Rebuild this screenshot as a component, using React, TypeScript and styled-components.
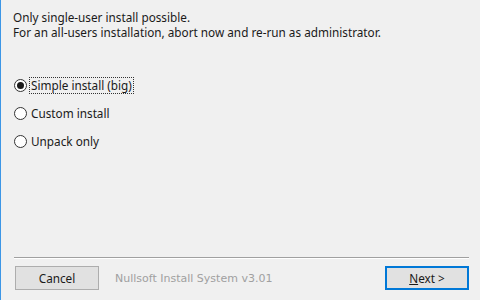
import React from 'react';
import styled, { createGlobalStyle } from 'styled-components';

const GlobalStyle = createGlobalStyle`
  html, body {
    margin: 0;
    padding: 0;
    background: #f0f0f0;
  }
`;

const Window = styled.div`
  width: 480px;
  height: 300px;
  box-sizing: border-box;
  border-left: 1px solid #3c96e6;
  background: #f0f0f0;
  display: flex;
  flex-direction: column;
  font-family: 'Noto Sans', 'Liberation Sans', sans-serif;
  font-size: 11.75px;
  color: #1a1a1a;
`;

const Body = styled.div`
  flex: 1;
  padding: 10px 0 0 12px;
  display: flex;
  flex-direction: column;
`;

const Intro = styled.div`
  line-height: 15px;
  margin-bottom: 37px;
`;

const Options = styled.div`
  display: flex;
  flex-direction: column;
  gap: 11px;
`;

const Option = styled.label`
  display: flex;
  align-items: center;
  gap: 3px;
  height: 17px;
  padding-left: 1px;
`;

const Radio = styled.span<{ $checked?: boolean }>`
  width: 11px;
  height: 11px;
  border: 1px solid #333;
  border-radius: 50%;
  background: #fff;
  display: flex;
  align-items: center;
  justify-content: center;

  &::after {
    content: '';
    width: 7px;
    height: 7px;
    border-radius: 50%;
    background: ${(p) => (p.$checked ? '#1a1a1a' : 'transparent')};
  }
`;

const OptionLabel = styled.span<{ $focused?: boolean }>`
  outline: ${(p) => (p.$focused ? '1px dotted #333' : 'none')};
  padding: 0 1px;
  line-height: 15px;
`;

const Footer = styled.div`
  padding: 0 11px 10px 13px;
  display: flex;
  flex-direction: column;
  gap: 8px;
`;

const Separator = styled.div`
  height: 1px;
  background: #a0a0a0;
  box-shadow: 0 1px 0 #ffffff;
`;

const ButtonRow = styled.div`
  display: flex;
  align-items: center;
  padding-left: 1px;
`;

const Button = styled.button<{ $default?: boolean }>`
  width: 84px;
  height: 24px;
  box-sizing: border-box;
  background: #e1e1e1;
  border: 1px solid ${(p) => (p.$default ? '#0078d7' : '#adadad')};
  box-shadow: ${(p) => (p.$default ? 'inset 0 0 0 1px #0078d7' : 'none')};
  font-family: inherit;
  font-size: 11.75px;
  color: #1a1a1a;
  padding: 0;
`;

const Brand = styled.span`
  flex: 1;
  padding-left: 16px;
  color: #a0a0a0;
  font-family: 'DejaVu Sans', sans-serif;
  font-size: 11px;
`;

const Mnemonic = styled.span`
  text-decoration: underline;
`;

export default function App() {
  return (
    <>
      <GlobalStyle />
      <Window>
        <Body>
          <Intro>
            Only single-user install possible.
            <br />
            For an all-users installation, abort now and re-run as administrator.
          </Intro>
          <Options>
            <Option>
              <Radio $checked />
              <OptionLabel $focused>Simple install (big)</OptionLabel>
            </Option>
            <Option>
              <Radio />
              <OptionLabel>Custom install</OptionLabel>
            </Option>
            <Option>
              <Radio />
              <OptionLabel>Unpack only</OptionLabel>
            </Option>
          </Options>
        </Body>
        <Footer>
          <Separator />
          <ButtonRow>
            <Button>Cancel</Button>
            <Brand>Nullsoft Install System v3.01</Brand>
            <Button $default>
              <Mnemonic>N</Mnemonic>ext &gt;
            </Button>
          </ButtonRow>
        </Footer>
      </Window>
    </>
  );
}
